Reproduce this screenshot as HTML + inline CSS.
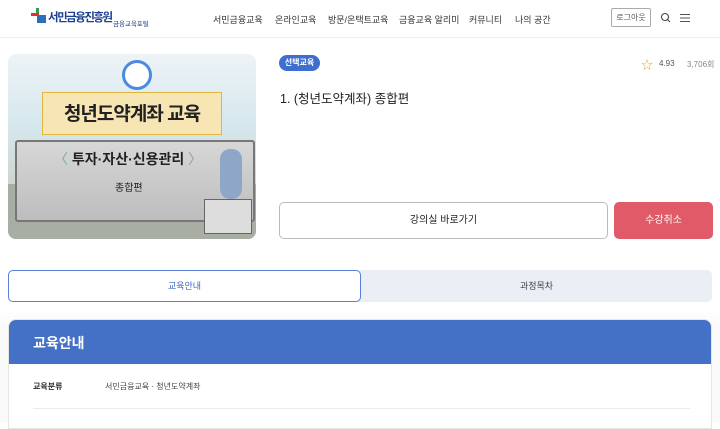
<!DOCTYPE html>
<html><head><meta charset="utf-8"><style>
*{margin:0;padding:0;box-sizing:border-box}
body{width:720px;height:422px;overflow:hidden;background:#fff;font-family:"Liberation Sans","Noto Sans CJK KR",sans-serif;color:#222;position:relative}
.a{position:absolute}
.nav span{position:absolute;top:13px;font-size:9px;color:#333}
</style></head><body>
<div class="a" style="left:0;top:0;width:720px;height:38px;border-bottom:1px solid #eee"></div>
<svg class="a" style="left:31px;top:8px" width="16" height="16"><rect x="5" y="0" width="3" height="8" fill="#3a9a4a"/><rect x="0" y="5" width="8" height="3" fill="#d8323a"/><rect x="6" y="7" width="9" height="8" fill="#2e6db8"/></svg>
<div class="a" style="left:48px;top:9px;font-size:11.5px;font-weight:bold;color:#1d3f8f;letter-spacing:-1.5px">서민금융진흥원</div>
<div class="a" style="left:113px;top:18px;font-size:6.5px;color:#1d3f8f">금융교육포털</div>
<div class="nav"><span style="left:213px">서민금융교육</span><span style="left:275px">온라인교육</span><span style="left:328px">방문/온택트교육</span><span style="left:399px">금융교육 알리미</span><span style="left:469px">커뮤니티</span><span style="left:515px">나의 공간</span></div>
<div class="a" style="left:611px;top:8px;width:40px;height:19px;border:1px solid #aaa;border-radius:2px;font-size:8px;text-align:center;line-height:17px;color:#555">로그아웃</div>
<svg class="a" style="left:660px;top:12px" width="12" height="12"><circle cx="5" cy="5" r="3.5" fill="none" stroke="#444" stroke-width="1.1"/><line x1="7.5" y1="7.5" x2="10" y2="10" stroke="#444" stroke-width="1.1"/></svg>
<svg class="a" style="left:680px;top:13px" width="10" height="10"><path d="M0 1.5h10M0 5h10M0 8.5h10" stroke="#555" stroke-width="1"/></svg>

<div class="a" style="left:8px;top:54px;width:248px;height:185px;border-radius:8px;overflow:hidden;background:linear-gradient(#eef3f6,#d5e7ee 40%,#cfd5cf 70%,#9aa199)">
 <div class="a" style="left:0;top:130px;width:248px;height:55px;background:#a9aea5"></div>
 <div class="a" style="left:114px;top:6px;width:30px;height:30px;border-radius:50%;background:#fff;border:3px solid #4a8ae0"></div>
 <div class="a" style="left:34px;top:38px;width:180px;height:43px;background:#f7e6b4;border:1.5px solid #e0b640"></div>
 <div class="a" style="left:34px;top:45px;width:180px;text-align:center;font-size:19px;font-weight:bold;color:#222;letter-spacing:-1px">청년도약계좌 교육</div>
 <div class="a" style="left:7px;top:86px;width:240px;height:82px;background:linear-gradient(#d7d7d7,#bdbdbd);border:2px solid #777;border-radius:3px"></div>
 <div class="a" style="left:46px;top:95px;font-size:14px;font-weight:bold;color:#222"><span style="color:#7aa;font-weight:normal">〈</span> 투자·자산·신용관리 <span style="color:#7aa;font-weight:normal">〉</span></div>
 <div class="a" style="left:107px;top:125px;font-size:10px;color:#222">종합편</div>
 <div class="a" style="left:196px;top:145px;width:48px;height:35px;background:#ddd;border:1px solid #666"></div>
 <div class="a" style="left:212px;top:95px;width:22px;height:50px;background:#8ea6c8;border-radius:10px"></div>
</div>

<div class="a" style="left:279px;top:55px;width:41px;height:16px;background:#3e6ed0;border-radius:8px;color:#fff;font-size:8px;font-weight:bold;text-align:center;line-height:16px">선택교육</div>
<div class="a" style="left:641px;top:56px;font-size:12px;color:#e6a81e">☆</div>
<div class="a" style="left:659px;top:59px;font-size:8px;color:#555">4.93</div>
<div class="a" style="left:687px;top:59px;font-size:8px;color:#888">3,706회</div>
<div class="a" style="left:280px;top:88px;font-size:12.5px;color:#222">1. (청년도약계좌) 종합편</div>
<div class="a" style="left:279px;top:202px;width:329px;height:37px;border:1px solid #bbb;border-radius:5px;text-align:center;line-height:35px;font-size:10px">강의실 바로가기</div>
<div class="a" style="left:614px;top:202px;width:99px;height:37px;background:#e05a67;border-radius:5px;text-align:center;line-height:37px;font-size:10px;color:#fff">수강취소</div>

<div class="a" style="left:8px;top:270px;width:704px;height:32px;background:#eaeef5;border-radius:5px"></div>
<div class="a" style="left:8px;top:270px;width:353px;height:32px;background:#fff;border:1px solid #5a7fd6;border-radius:5px;text-align:center;line-height:30px;font-size:9px;color:#3e63c2">교육안내</div>
<div class="a" style="left:361px;top:270px;width:351px;height:32px;text-align:center;line-height:32px;font-size:9px;color:#444">과정목차</div>
<div class="a" style="left:0;top:308px;width:720px;height:114px;background:linear-gradient(#fff,#f9f9f9 20px)"></div>
<div class="a" style="left:8px;top:319px;width:704px;height:110px;background:#fff;border:1px solid #e6e6e6;border-radius:8px 8px 0 0;overflow:hidden">
 <div style="height:44px;background:#4470c6;color:#fff;font-size:14px;font-weight:bold;padding:13px 0 0 24px">교육안내</div>
</div>
<div class="a" style="left:33px;top:381px;font-size:8px;font-weight:bold;color:#333">교육분류</div>
<div class="a" style="left:105px;top:381px;font-size:8px;color:#444">서민금융교육 · 청년도약계좌</div>
<div class="a" style="left:33px;top:408px;width:657px;height:1px;background:#e8ecf2"></div>
</body></html>
